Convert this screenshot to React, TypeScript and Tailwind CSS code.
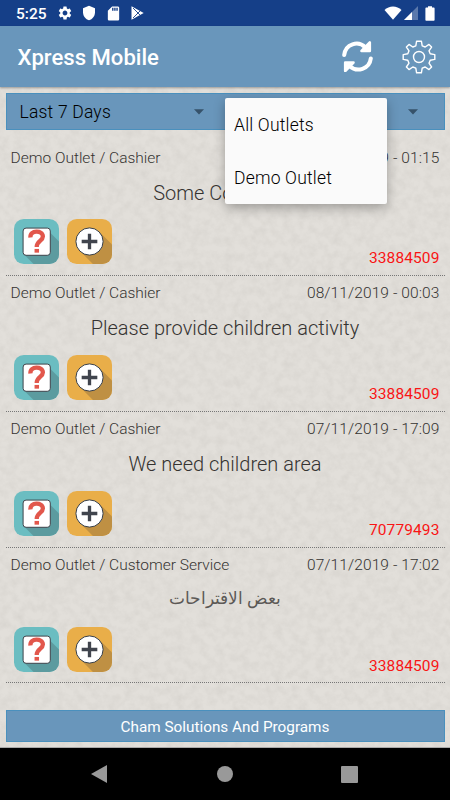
import { memo } from "react";
import { MdSdCard, MdSettings, MdShield } from "react-icons/md";

type Feedback = {
  place: string;
  date: string;
  text: string;
  phone: string;
  rtl?: boolean;
};

const feedbacks: Feedback[] = [
  {
    place: "Demo Outlet / Cashier",
    date: "08/11/2019 - 01:15",
    text: "Some Comment",
    phone: "33884509",
  },
  {
    place: "Demo Outlet / Cashier",
    date: "08/11/2019 - 00:03",
    text: "Please provide children activity",
    phone: "33884509",
  },
  {
    place: "Demo Outlet / Cashier",
    date: "07/11/2019 - 17:09",
    text: "We need children area",
    phone: "70779493",
  },
  {
    place: "Demo Outlet / Customer Service",
    date: "07/11/2019 - 17:02",
    text: "بعض الاقتراحات",
    phone: "33884509",
    rtl: true,
  },
];

const StatusBar = () => (
  <div className="flex h-[26px] shrink-0 items-center bg-[#153f88] pr-[15px] pl-4 text-white">
    <span className="w-[41px] pt-[3px] text-[15.5px] font-medium">5:25</span>
    <MdSettings className="mr-[8px] size-4" />
    <MdShield className="mr-[8px] size-4" />
    <MdSdCard className="mr-[9px] size-[17px]" />
    <svg viewBox="0 0 13 14" className="h-[14px] w-[13px]">
      <path d="M0.5 0.3 L12.7 7 L0.5 13.7 Z" fill="white" />
      <path
        d="M2 2 L7 7 L2 12 M6.5 7.5 L9.8 4.2 M6.5 6.5 L9.8 9.8"
        stroke="#153f88"
        strokeWidth="0.9"
        fill="none"
      />
    </svg>
    <svg viewBox="0 0 18 14" className="mr-0.5 ml-auto h-[14px] w-[18px]">
      <path d="M0.5 4 C5 -0.8 13 -0.8 17.5 4 L9 13.8 Z" fill="white" />
    </svg>
    <svg viewBox="0 0 14 14" className="mr-[7px] size-[14px]">
      <path d="M0 14 L14 0 V14 Z" fill="white" fillOpacity="0.3" />
      <path d="M0 14 L8 6 V14 Z" fill="white" />
    </svg>
    <svg viewBox="0 0 10 15" className="h-[15px] w-[10px]" fill="white">
      <path d="M3 0.3 H7 V1.6 H8.8 Q9.6 1.6 9.6 2.4 V14 Q9.6 14.8 8.8 14.8 H1.2 Q0.4 14.8 0.4 14 V2.4 Q0.4 1.6 1.2 1.6 H3 Z" />
    </svg>
  </div>
);

const RefreshIcon = () => (
  <svg viewBox="0 0 31 31" className="size-[31px]" fill="none">
    <path
      d="M2.2 14 C3.5 3 16 -1 23.5 6.5 M28.8 17.5 C27.5 28 15 32 7.5 25"
      stroke="white"
      strokeWidth="4"
      strokeLinecap="round"
    />
    <path
      d="M27.8 1.5 V10 H19.5 Z M3.2 30 V21.5 H11.5 Z"
      fill="white"
      stroke="white"
      strokeWidth="2.6"
      strokeLinejoin="round"
    />
  </svg>
);

const GearIcon = () => (
  <svg
    viewBox="0 0 34 34"
    className="size-[34px]"
    fill="none"
    stroke="white"
    strokeWidth="1.4"
    strokeLinejoin="round"
  >
    <path d="M14.6 1.2 H19.4 L20.2 5.8 L23.2 7 L27 4.4 L29.6 7 L27 10.8 L28.2 13.8 L32.8 14.6 V19.4 L28.2 20.2 L27 23.2 L29.6 27 L27 29.6 L23.2 27 L20.2 28.2 L19.4 32.8 H14.6 L13.8 28.2 L10.8 27 L7 29.6 L4.4 27 L7 23.2 L5.8 20.2 L1.2 19.4 V14.6 L5.8 13.8 L7 10.8 L4.4 7 L7 4.4 L10.8 7 L13.8 5.8 Z" />
    <circle cx="17" cy="17" r="5.5" />
  </svg>
);

const Header = () => (
  <header className="z-10 flex h-[61px] shrink-0 items-center bg-[#6996bb] pr-3.5 pl-[17.5px] shadow-[0_1px_2px_rgba(0,0,0,0.3)]">
    <h1 className="mr-auto pt-[3px] text-[22.1px] font-medium text-white">
      Xpress Mobile
    </h1>
    <button className="mr-[29px]">
      <RefreshIcon />
    </button>
    <button>
      <GearIcon />
    </button>
  </header>
);

const QuestionIcon = () => (
  <svg viewBox="0 0 46 46" className="size-[45px]">
    <rect width="46" height="46" rx="10" fill="#6bbdc1" />
    <path d="M36 13 L46 23 V36 A10 10 0 0 1 36 46 H20 L10 36 Z" fill="#5c9b9f" />
    <rect x="9.3" y="9.3" width="27.8" height="27.8" rx="3" fill="white" stroke="#3c4047" />
    <path
      d="M16.8 19 C16 11 29.5 11 29.5 17.8 C29.5 22.5 23.2 22.5 23.2 28.5"
      fill="none"
      stroke="#e2574c"
      strokeWidth="4.4"
    />
    <rect x="21" y="30.6" width="4.6" height="3.8" fill="#e2574c" />
  </svg>
);

const PlusIcon = () => (
  <svg viewBox="0 0 46 46" className="size-[45px]">
    <rect width="46" height="46" rx="10" fill="#e9ae49" />
    <path d="M33 13 L46 26 V36 A10 10 0 0 1 36 46 H26.5 L13 32.5 Z" fill="#bf9043" />
    <circle cx="23" cy="23" r="13.9" fill="white" stroke="#343c48" />
    <path d="M15 23 H31 M23 15 V31" stroke="#40444d" strokeWidth="3.4" />
  </svg>
);

const Caret = () => (
  <svg viewBox="0 0 10 6" className="h-1.5 w-2.5" fill="#36526a">
    <path d="M0 0.3 H10 L5 5.5 Z" />
  </svg>
);

const OutletMenu = () => (
  <div className="absolute top-1 left-[218.5px] z-20 flex h-[105.5px] w-[162px] flex-col rounded-[2px] bg-[#fafafa] shadow-[0_4px_12px_rgba(0,0,0,0.3)]">
    <div className="flex h-[53px] items-center pt-[2px] pl-[9px]">All Outlets</div>
    <div className="flex h-[52px] items-center pt-[2px] pl-[9px]">Demo Outlet</div>
  </div>
);

const Filters = () => (
  <div className="relative flex h-[37px] shrink-0 border border-[#4a90bd] bg-[#6996bb] text-[17.5px] font-light tracking-[0.2px] text-black">
    <div className="flex w-[207px] items-center justify-between pr-2.5 pl-[13px]">
      <span className="pt-[2px]">Last 7 Days</span>
      <Caret />
    </div>
    <div className="flex flex-1 items-center justify-end pr-[26px]">
      <Caret />
    </div>
    <OutletMenu />
  </div>
);

const FeedbackRow = memo(({ feedback }: { feedback: Feedback }) => (
  <div className="flex h-[135.8px] flex-col border-b border-dotted border-[#777] px-[5px] pt-2 text-[15.5px] font-light text-[#353331]">
    <div className="flex h-5 items-center justify-between">
      <span>{feedback.place}</span>
      <span className="tracking-[0.1px]">{feedback.date}</span>
    </div>
    <div
      className={
        feedback.rtl
          ? "flex h-[51px] items-center justify-center pb-1 text-[17.2px] text-[#5c5956]"
          : "flex h-[51px] items-center justify-center pb-0.5 text-[20px]"
      }
    >
      {feedback.text}
    </div>
    <div className="flex items-start gap-[7.5px] pl-[3.5px]">
      <QuestionIcon />
      <PlusIcon />
      <span className="mt-[29px] ml-auto leading-5 font-normal tracking-[0.1px] text-[#f91414]">
        {feedback.phone}
      </span>
    </div>
  </div>
));

const PaperTexture = () => (
  <svg className="absolute inset-0 size-full">
    <filter id="paper" colorInterpolationFilters="sRGB">
      <feTurbulence type="fractalNoise" baseFrequency="0.12" numOctaves="5" seed="7" />
      <feColorMatrix values="0 0 0 0 0.35  0 0 0 0 0.33  0 0 0 0 0.3  0.12 0 0 0 -0.04" />
    </filter>
    <rect width="100%" height="100%" filter="url(#paper)" />
  </svg>
);

const NavigationBar = () => (
  <div className="flex h-[52px] shrink-0 items-center bg-black pl-[91px]">
    <svg viewBox="0 0 16 18" className="h-[18px] w-4" fill="#999">
      <path d="M0 9 L16 0 V18 Z" />
    </svg>
    <div className="ml-[110px] size-4 rounded-full bg-[#999]" />
    <div className="ml-[108px] size-[17px] rounded-[1px] bg-[#999]" />
  </div>
);

const App = () => (
  <div className="flex h-[800px] w-[450px] flex-col overflow-hidden bg-[#e2dfda] font-[Roboto,'Noto_Sans',sans-serif]">
    <StatusBar />
    <Header />
    <main className="relative flex flex-1 flex-col border-b border-[#aaa]">
      <PaperTexture />
      <div className="relative flex flex-1 flex-col px-[5.5px] pt-1.5 pb-[5px]">
        <Filters />
        <div className="flex-1 pt-[10.2px]">
          {feedbacks.map((feedback) => (
            <FeedbackRow key={feedback.date} feedback={feedback} />
          ))}
        </div>
        <footer className="flex h-8 items-center justify-center border border-[#4a90bd] bg-[#6996bb] pt-[3px] text-[15.3px] text-white">
          Cham Solutions And Programs
        </footer>
      </div>
    </main>
    <NavigationBar />
  </div>
);

export default App;
